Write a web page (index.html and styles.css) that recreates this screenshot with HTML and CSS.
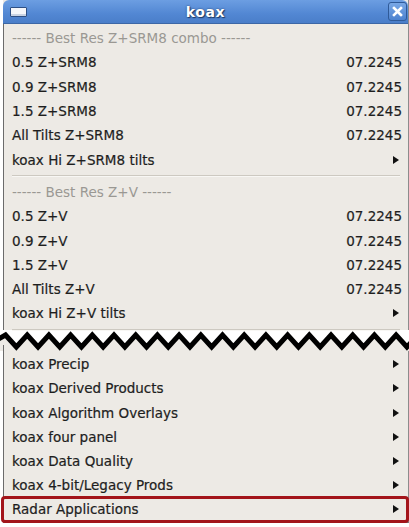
FILE: index.html
```html
<!DOCTYPE html>
<html lang="en">
<head>
    <meta charset="UTF-8">
    <title>koax</title>
    <link rel="stylesheet" href="styles.css">
</head>
<body>
<div class="win top">
    <div class="titlebar">
        <span class="winicon"></span>
        <span class="title">koax</span>
        <span class="close">
            <svg width="11" height="11" viewBox="0 0 11 11"><path d="M2 2L9 9M9 2L2 9" stroke="#fff" stroke-width="2.6" stroke-linecap="square"/></svg>
        </span>
    </div>
    <div class="menu">
        <div class="row head">------ Best Res Z+SRM8 combo ------</div>
        <div class="row"><span>0.5 Z+SRM8</span><span>07.2245</span></div>
        <div class="row"><span>0.9 Z+SRM8</span><span>07.2245</span></div>
        <div class="row"><span>1.5 Z+SRM8</span><span>07.2245</span></div>
        <div class="row"><span>All Tilts Z+SRM8</span><span>07.2245</span></div>
        <div class="row sub"><span>koax Hi Z+SRM8 tilts</span><i class="arrow"></i></div>
        <div class="sep"></div>
        <div class="row head">------ Best Res Z+V ------</div>
        <div class="row"><span>0.5 Z+V</span><span>07.2245</span></div>
        <div class="row"><span>0.9 Z+V</span><span>07.2245</span></div>
        <div class="row"><span>1.5 Z+V</span><span>07.2245</span></div>
        <div class="row"><span>All Tilts Z+V</span><span>07.2245</span></div>
        <div class="row sub"><span>koax Hi Z+V tilts</span><i class="arrow"></i></div>
        <div class="sep last"></div>
    </div>
</div>
<svg class="cut" width="409" height="20" viewBox="0 0 409 20">
    <polygon id="fill" fill="#edeae5"/>
    <line x1="3.5" y1="14" x2="3.5" y2="20" stroke="#6b6b6b" stroke-width="1"/>
    <polyline id="zig" fill="none" stroke="#000" stroke-width="5" stroke-linejoin="miter"/>
</svg>
<div class="win bottom">
    <div class="menu">
        <div class="row sub"><span>koax Precip</span><i class="arrow"></i></div>
        <div class="row sub"><span>koax Derived Products</span><i class="arrow"></i></div>
        <div class="row sub"><span>koax Algorithm Overlays</span><i class="arrow"></i></div>
        <div class="row sub"><span>koax four panel</span><i class="arrow"></i></div>
        <div class="row sub"><span>koax Data Quality</span><i class="arrow"></i></div>
        <div class="row sub"><span>koax 4-bit/Legacy Prods</span><i class="arrow"></i></div>
        <div class="row sub marked"><span>Radar Applications</span><i class="arrow"></i></div>
    </div>
</div>
<script>
    var pts=[],x,up=false;
    pts.push('-5,10');
    for(x=5.5;x<420;x+=10.85){
        pts.push(x+','+(up?16:4));
        up=!up;
    }
    var line=pts.join(' ');
    document.getElementById('zig').setAttribute('points',line);
    document.getElementById('fill').setAttribute('points',line+' 420,20 -5,20');
</script>
</body>
</html>
```

FILE: styles.css
```css
html,body{
    margin: 0;
    padding: 0;
    background: #fff;
}
body{
    width: 409px;
    height: 527px;
    overflow: hidden;
    font-family: "DejaVu Sans", sans-serif;
    font-size: 13.5px;
    color: #1e1e1e;
    -webkit-text-stroke: 0.2px #1e1e1e;
}
.win{
    margin-left: 3px;
    width: 404px;
    background: #edeae5;
    border-left: 1px solid #6b6b6b;
    border-right: 1px solid #8c8c8c;
}
.win.top{
    border-left: none;
    width: 405px;
}
.top .menu{
    border-left: 1px solid #6b6b6b;
    padding-top: 2px;
}
.bottom{
    border-bottom: 1px solid #6b6b6b;
    padding-bottom: 1px;
}
.titlebar{
    height: 24px;
    background: linear-gradient(#6c9ee2, #5287d3 60%, #4a7ec9);
    border-radius: 6px 6px 0 0;
    display: flex;
    align-items: center;
    border-bottom: 1px solid #3c67a6;
    box-sizing: border-box;
    -webkit-text-stroke: 0;
}
.winicon{
    width: 15px;
    height: 8px;
    margin-left: 7px;
    background: #f4f6fa;
    border: 1px solid #2d4f85;
    border-radius: 1px;
    box-shadow: inset 0 -2px 0 #c9d3e3;
}
.title{
    flex: 1;
    text-align: center;
    color: #fff;
    font-weight: bold;
    font-size: 14px;
    letter-spacing: 0.6px;
    text-shadow: 1px 1px 1px #1e3a66, 0 0 2px #1e3a66;
    margin-left: -4px;
}
.close{
    width: 17px;
    height: 17px;
    margin-right: 1px;
    border: 1px solid #2f5a98;
    border-radius: 3px;
    background: linear-gradient(#79a8e6, #4d82cf);
    display: flex;
    align-items: center;
    justify-content: center;
}
.menu{
    padding: 0 6px 0 8px;
}
.bottom .menu{
    padding-top: 1px;
}
.row{
    height: 24.3px;
    display: flex;
    align-items: center;
    justify-content: space-between;
    white-space: nowrap;
}
.bottom .row{
    height: 24.2px;
}
.row.head{
    color: #9a9893;
    -webkit-text-stroke: 0;
}
.sep{
    height: 1px;
    margin: 3.5px 2px 3.5px 0;
    background: #cdc9c1;
    box-shadow: 0 1px 0 #f8f7f4;
}
.sep.last{
    margin-bottom: 1px;
}
.arrow{
    width: 0;
    height: 0;
    border-left: 6px solid #111;
    border-top: 4px solid transparent;
    border-bottom: 4px solid transparent;
    margin-right: 3px;
}
.cut{
    display: block;
}
.marked{
    position: relative;
}
.marked:after{
    content: '';
    position: absolute;
    left: -11px;
    right: -7px;
    top: -1px;
    bottom: -2px;
    border: 3px solid #a3141a;
    border-radius: 4px;
}
```
